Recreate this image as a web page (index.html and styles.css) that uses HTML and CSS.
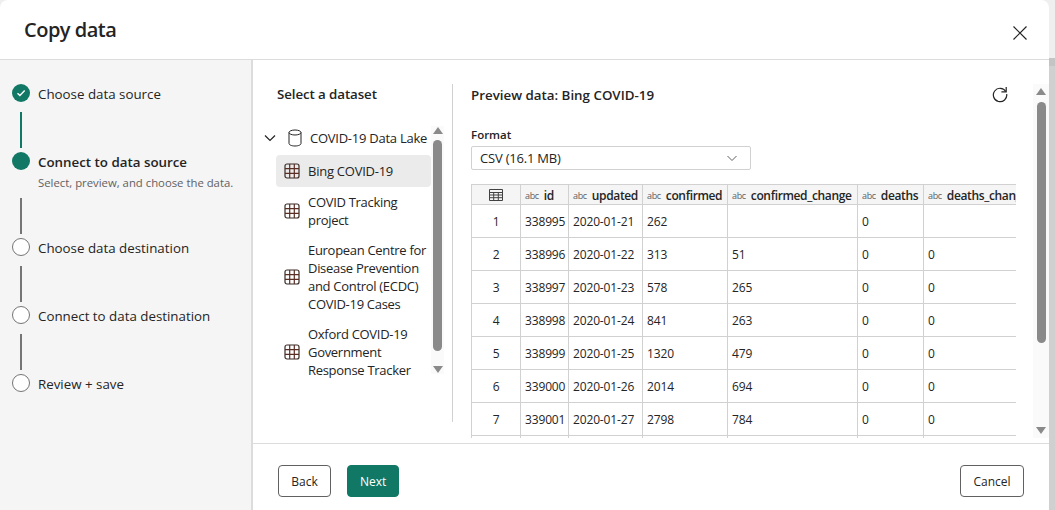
FILE: index.html
```html
<!DOCTYPE html>
<html lang="en">
  <head>
    <meta charset="UTF-8" />
    <meta name="viewport" content="width=device-width, initial-scale=1.0" />
    <title>Copy data</title>
    <link rel="stylesheet" href="styles.css">
  </head>
  <body>
    <div class="dialog">
      <header class="dialog-header">
        <h1>Copy data</h1>
        <button type="button" class="close-button" aria-label="Close">
          <svg width="14" height="14" viewBox="0 0 14 14"><path d="M.5.500l13 13M13.500.500l-13 13" fill="none" stroke="#242424" stroke-width="1.200" /></svg>
        </button>
      </header>

      <div class="dialog-body">
        <nav class="steps">
          <div class="step">
            <span class="dot dot-done">
              <svg width="10" height="10" viewBox="0 0 10 10"><path d="M1.500 5.300l2.400 2.300 4.800-5" fill="none" stroke="#fff" stroke-width="1.400" /></svg>
            </span>
            <span class="step-label">Choose data source</span>
          </div>
          <div class="line line-done"></div>
          <div class="step">
            <span class="dot dot-current"></span>
            <div class="step-text">
              <span class="step-label step-active">Connect to data source</span>
              <span class="step-hint">Select, preview, and choose the data.</span>
            </div>
          </div>
          <div class="line line-after-hint"></div>
          <div class="step">
            <span class="dot"></span>
            <span class="step-label">Choose data destination</span>
          </div>
          <div class="line"></div>
          <div class="step">
            <span class="dot"></span>
            <span class="step-label">Connect to data destination</span>
          </div>
          <div class="line"></div>
          <div class="step">
            <span class="dot"></span>
            <span class="step-label">Review + save</span>
          </div>
        </nav>

        <main class="content">
          <div class="panes">
            <section class="dataset-pane">
              <h2 class="dataset-title">Select a dataset</h2>
              <div class="tree-wrap">
                <div class="tree">
                  <div class="tree-root">
                    <svg class="chevron" width="12" height="12" viewBox="0 0 12 12"><path d="M1 3.500l5 5 5-5" fill="none" stroke="#242424" stroke-width="1.200" /></svg>
                    <svg class="lake-icon" width="14" height="18" viewBox="0 0 14 18"><ellipse cx="7" cy="3.500" rx="6" ry="2.500" fill="none" stroke="#242424" /><path d="M1 3.500v11C1 15.900 3.700 17 7 17s6-1.100 6-2.500v-11" fill="none" stroke="#242424" /></svg>
                    <span>COVID-19 Data Lake</span>
                  </div>
                  <div class="tree-item tree-item-selected">
                    <svg class="grid-icon" width="16" height="16" viewBox="0 0 16 16"><use href="#table-icon" /></svg>
                    <span>Bing COVID-19</span>
                  </div>
                  <div class="tree-item">
                    <svg class="grid-icon" width="16" height="16" viewBox="0 0 16 16"><use href="#table-icon" /></svg>
                    <span>COVID Tracking project</span>
                  </div>
                  <div class="tree-item">
                    <svg class="grid-icon" width="16" height="16" viewBox="0 0 16 16"><use href="#table-icon" /></svg>
                    <span>European Centre for Disease Prevention and Control (ECDC) COVID-19 Cases</span>
                  </div>
                  <div class="tree-item">
                    <svg class="grid-icon" width="16" height="16" viewBox="0 0 16 16"><use href="#table-icon" /></svg>
                    <span>Oxford COVID-19 Government Response Tracker</span>
                  </div>
                </div>
                <div class="scrollbar scrollbar-list">
                  <span class="arrow-up"></span>
                  <span class="thumb"></span>
                  <span class="arrow-down"></span>
                </div>
              </div>
            </section>

            <section class="preview-pane">
              <div class="preview-head">
                <h2 class="preview-title">Preview data: Bing COVID-19</h2>
                <svg class="refresh" width="18" height="18" viewBox="0 0 18 18"><path d="M14.800 6.500A6.700 6.700 0 1 0 15.700 9" fill="none" stroke="#242424" stroke-width="1.200" /><path d="M15.200 2v4.800h-4.800" fill="none" stroke="#242424" stroke-width="1.200" /></svg>
              </div>
              <label class="format-label">Format</label>
              <div class="format-select">
                <span>CSV (16.1 MB)</span>
                <svg width="12" height="12" viewBox="0 0 12 12"><path d="M1.500 4l4.500 4.500L10.500 4" fill="none" stroke="#616161" /></svg>
              </div>
              <div class="table-clip">
                <table class="data-table">
                  <colgroup>
                    <col class="col-n" /><col class="col-id" /><col class="col-date" /><col class="col-conf" /><col class="col-change" /><col class="col-deaths" /><col class="col-dchange" />
                  </colgroup>
                  <thead>
                    <tr>
                      <th class="corner"><svg width="14" height="12" viewBox="0 0 14 12"><path d="M.5.500h13v11H.500zM.5 3.500h13M.5 6h13M.5 8.700h13M4.700 3.500v8M9.300 3.500v8" fill="none" stroke="#424242" /></svg></th>
                      <th><i>abc</i>id</th>
                      <th><i>abc</i>updated</th>
                      <th><i>abc</i>confirmed</th>
                      <th><i>abc</i>confirmed_change</th>
                      <th><i>abc</i>deaths</th>
                      <th><i>abc</i>deaths_change</th>
                    </tr>
                  </thead>
                  <tbody>
                    <tr><td class="num">1</td><td>338995</td><td>2020-01-21</td><td>262</td><td></td><td>0</td><td></td></tr>
                    <tr><td class="num">2</td><td>338996</td><td>2020-01-22</td><td>313</td><td>51</td><td>0</td><td>0</td></tr>
                    <tr><td class="num">3</td><td>338997</td><td>2020-01-23</td><td>578</td><td>265</td><td>0</td><td>0</td></tr>
                    <tr><td class="num">4</td><td>338998</td><td>2020-01-24</td><td>841</td><td>263</td><td>0</td><td>0</td></tr>
                    <tr><td class="num">5</td><td>338999</td><td>2020-01-25</td><td>1320</td><td>479</td><td>0</td><td>0</td></tr>
                    <tr><td class="num">6</td><td>339000</td><td>2020-01-26</td><td>2014</td><td>694</td><td>0</td><td>0</td></tr>
                    <tr><td class="num">7</td><td>339001</td><td>2020-01-27</td><td>2798</td><td>784</td><td>0</td><td>0</td></tr>
                    <tr><td class="num"></td><td></td><td></td><td></td><td></td><td></td><td></td></tr>
                  </tbody>
                </table>
              </div>
            </section>

            <div class="scrollbar scrollbar-main">
              <span class="arrow-up"></span>
              <span class="thumb"></span>
              <span class="arrow-down"></span>
            </div>
          </div>

          <footer class="dialog-footer">
            <button type="button" class="btn btn-back">Back</button>
            <button type="button" class="btn btn-primary">Next</button>
            <button type="button" class="btn btn-cancel">Cancel</button>
          </footer>
        </main>
      </div>
    </div>

    <svg class="icon-defs" width="0" height="0">
      <symbol id="table-icon" viewBox="0 0 16 16">
        <rect x="1" y="1" width="14" height="14" rx="2" fill="none" stroke="#3b2a26" stroke-width="1.200" />
        <path d="M1 5.700h14M1 10.300h14M5.700 1v14M10.300 1v14" fill="none" stroke="#5a2e22" stroke-width="1.200" />
      </symbol>
    </svg>
  </body>
</html>
```

FILE: styles.css
```css
* {
  box-sizing: border-box;
}

html,
body {
  height: 100%;
}

body {
  margin: 0;
  overflow: hidden;
  background: linear-gradient(#efefef 58px, #c4c4c4 58px, #c4c4c4 66px, #d0d0d0 66px);
  color: #242424;
  font-family: "Open Sans", "Noto Sans", sans-serif;
  font-size: 13.33px;
}

.icon-defs {
  display: block;
}

.dialog {
  width: 1049px;
  height: 510px;
  display: flex;
  flex-direction: column;
  background-color: #fff;
  border-radius: 8px 8px 0 0;
  overflow: hidden;
}

.dialog-header {
  height: 60px;
  flex: none;
  display: flex;
  align-items: center;
  justify-content: space-between;
  padding: 0 22px 0 24px;
  border-bottom: 1px solid #dcdcdc;
}

.dialog-header h1 {
  margin: 0;
  font-size: 20px;
  font-weight: 600;
  letter-spacing: -0.5px;
}

.close-button {
  display: flex;
  margin-top: 6px;
  padding: 0;
  border: none;
  background: none;
}

.dialog-body {
  flex: 1;
  min-height: 0;
  display: flex;
}

/* left step list */
.steps {
  width: 253px;
  flex: none;
  padding: 24px 0 0 12px;
  background-color: #f5f5f5;
  border-right: 2px solid #dcdcdc;
}

.step {
  display: flex;
  gap: 8px;
  min-height: 18px;
}

.step-text {
  display: flex;
  flex-direction: column;
}

.step-label {
  padding-top: 1px;
  line-height: 18px;
}

.step-active {
  font-weight: 600;
}

.step-hint {
  margin-top: 5px;
  font-size: 11.33px;
  line-height: 14px;
  color: #616161;
}

.dot {
  width: 18px;
  height: 18px;
  flex: none;
  display: flex;
  align-items: center;
  justify-content: center;
  border: 1px solid #757575;
  border-radius: 50%;
  background-color: #fff;
}

.dot-done,
.dot-current {
  border: none;
  background-color: #117865;
}

.line {
  width: 2px;
  height: 36px;
  margin: 9px 0 4px 8px;
  background-color: #757575;
}

.line-done {
  background-color: #117865;
}

.line-after-hint {
  margin-top: 8px;
}

/* main area */
.content {
  flex: 1;
  min-width: 0;
  display: flex;
  flex-direction: column;
}

.panes {
  height: 384px;
  flex: none;
  display: flex;
  border-bottom: 1px solid #dcdcdc;
}

.dataset-pane {
  width: 200px;
  flex: none;
  margin: 24px 0 21px;
  border-right: 1px solid #d1d1d1;
}

.dataset-title {
  margin: 0 0 22px 24px;
  font-size: 13.33px;
  line-height: 20px;
  font-weight: 600;
  letter-spacing: -0.1px;
}

.tree-wrap {
  display: flex;
  padding-left: 11px;
}

.tree {
  width: 167px;
  flex: none;
  height: 254px;
  overflow: hidden;
}

.tree-root {
  display: flex;
  align-items: center;
  gap: 12px;
  height: 24px;
  margin-bottom: 5px;
  white-space: nowrap;
  font-size: 13px;
  letter-spacing: -0.25px;
}

.lake-icon {
  margin-right: -4px;
}

.tree-item {
  display: flex;
  align-items: center;
  gap: 8px;
  width: 155px;
  margin-left: 12px;
  padding: 6px 0 6px 8px;
  font-size: 13px;
  line-height: 18px;
  letter-spacing: -0.3px;
}

.tree-item-selected {
  background-color: #ebebeb;
  border-radius: 4px;
  padding-top: 7px;
  padding-bottom: 7px;
  letter-spacing: -0.25px;
}

.grid-icon {
  flex: none;
}

.scrollbar {
  width: 13px;
  flex: none;
  display: flex;
  flex-direction: column;
  align-items: center;
  background-color: #fafafa;
}

.scrollbar-list {
  height: 248px;
  padding-top: 1px;
}

.thumb {
  width: 9px;
  margin: 6px 0 15px;
  background-color: #8a8a8a;
  border-radius: 5px;
}

.scrollbar-list .thumb {
  height: 211px;
}

.arrow-up,
.arrow-down {
  width: 0;
  height: 0;
  flex: none;
  border-left: 5px solid transparent;
  border-right: 5px solid transparent;
}

.arrow-up {
  border-bottom: 7px solid #8a8a8a;
}

.arrow-down {
  border-top: 7px solid #8a8a8a;
}

.preview-pane {
  width: 580px;
  flex: none;
  padding: 24px 0 0 18px;
  min-height: 0;
}

.preview-head {
  display: flex;
  justify-content: space-between;
  align-items: center;
  height: 20px;
  margin-bottom: 23px;
  padding-right: 24px;
}

.preview-title {
  margin: 2px 0 0;
  font-size: 13.33px;
  font-weight: 600;
}

.format-label {
  display: block;
  font-size: 11.500px;
  line-height: 15px;
  font-weight: 600;
  margin-bottom: 4px;
}

.format-select {
  width: 280px;
  height: 24px;
  display: flex;
  align-items: center;
  justify-content: space-between;
  padding: 0 12px 0 8px;
  border: 1px solid #d1d1d1;
  border-radius: 2px;
  margin-bottom: 14px;
  font-size: 13px;
  letter-spacing: -0.2px;
}

.table-clip {
  width: 545px;
  height: 254px;
  overflow: hidden;
}

.data-table {
  width: 580px;
  table-layout: fixed;
  border-collapse: collapse;
  border-top: 1px solid #d1d1d1;
}

.col-n { width: 49px; }
.col-id { width: 48px; }
.col-date { width: 74px; }
.col-conf { width: 85px; }
.col-change { width: 130px; }
.col-deaths { width: 66px; }
.col-dchange { width: 128px; }

.data-table th,
.data-table td {
  border: 1px solid #d1d1d1;
  border-top: none;
  padding: 0 0 0 4px;
  white-space: nowrap;
  overflow: hidden;
  text-align: left;
}

.data-table th {
  height: 20px;
  padding-top: 1px;
  background-color: #f5f5f5;
  font-size: 12px;
  font-weight: 600;
  letter-spacing: -0.35px;
}

.data-table th i {
  margin-right: 5px;
  font-style: normal;
  font-weight: 400;
  font-size: 9px;
  color: #616161;
  vertical-align: 1px;
}

.data-table td {
  height: 33px;
  font-size: 12px;
  letter-spacing: -0.15px;
}

.data-table .corner,
.data-table .num {
  padding: 0;
  text-align: center;
}

.corner svg {
  display: block;
  margin: 0 auto;
}

.scrollbar-main {
  width: 16px;
  height: 354px;
  margin-top: 24px;
  padding-top: 4px;
}

.scrollbar-main .thumb {
  height: 241px;
  margin: 7px 0 84px;
}

.dialog-footer {
  flex: 1;
  display: flex;
  align-items: center;
  gap: 16px;
  padding: 8px 25px 0;
}

.btn {
  height: 32px;
  padding: 0 12px;
  font-family: inherit;
  font-size: 12px;
  color: #242424;
  background-color: #fff;
  border: 1px solid #616161;
  border-radius: 4px;
}

.btn-back {
  width: 53px;
}

.btn-primary {
  width: 52px;
  color: #fff;
  background-color: #117865;
  border-color: #117865;
  font-weight: 500;
}

.btn-cancel {
  width: 64px;
  margin-left: auto;
  padding: 0;
}
```
